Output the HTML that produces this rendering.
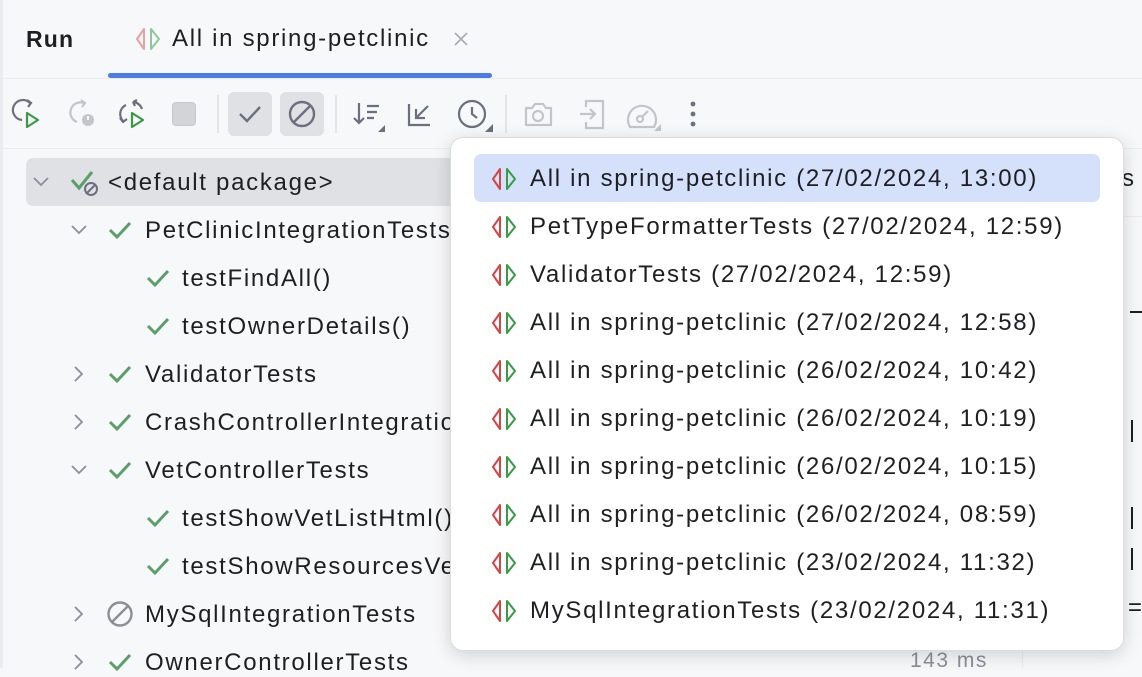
<!DOCTYPE html>
<html><head><meta charset="utf-8"><style>
*{margin:0;padding:0;box-sizing:border-box}
body{width:1142px;height:668px;overflow:hidden;background:#f7f8fa;font-family:"Liberation Sans",sans-serif;color:#1e1f22;position:relative}
.abs{position:absolute}
.t{position:absolute;font-size:24px;letter-spacing:1.7px;white-space:nowrap;line-height:28px}
svg{position:absolute;overflow:visible}
</style></head><body>
<div class="abs" style="left:0;top:0;width:3px;height:668px;background:#ebecf0"></div>
<!-- header -->
<div class="t" style="left:26px;top:25px;font-weight:bold;font-size:23px;letter-spacing:1.2px">Run</div>
<svg style="left:134px;top:27px" width="30" height="24"><path d="M10 2 L3 12 L10 22 Z" fill="none" stroke="#e8a0a0" stroke-width="2" stroke-linejoin="round"/><path d="M17 2 L25 12 L17 22 Z" fill="none" stroke="#8fc79a" stroke-width="2" stroke-linejoin="round"/></svg>
<div class="t" style="left:172px;top:25px">All in spring-petclinic</div>
<svg style="left:454px;top:32px" width="14" height="14"><path d="M1 1L13 13M13 1L1 13" stroke="#a8adb5" stroke-width="1.6"/></svg>
<div class="abs" style="left:108px;top:73px;width:384px;height:5px;border-radius:3px;background:#4a7de8"></div>
<div class="abs" style="left:3px;top:78px;width:1139px;height:1px;background:#ebecf0"></div>
<!-- toolbar -->
<svg style="left:14px;top:99px" width="32" height="32" fill="none" stroke-width="2.2"><path d="M16 4 A10 10 0 1 0 8 21" stroke="#6c707e"/><path d="M13 1 L17 4 L14 8" stroke="#6c707e"/><path d="M13 14 L24 21 L13 28 Z" stroke="#3a9a47" stroke-linejoin="round"/></svg>
<svg style="left:67px;top:99px" width="32" height="32" fill="none" stroke-width="2.2"><path d="M17 4 A10 10 0 1 0 10 23" stroke="#c3c5cb"/><path d="M14 1 L18 4 L15 8" stroke="#c3c5cb"/><circle cx="21" cy="21" r="6" fill="#c3c5cb" stroke="none"/><path d="M21 17v4" stroke="#fff" stroke-width="1.8"/></svg>
<svg style="left:117px;top:99px" width="34" height="34" fill="none" stroke-width="2.2" stroke-linejoin="round"><path d="M9 6 A10 10 0 0 0 6 22" stroke="#6c707e"/><path d="M3 19 L6 23 L10 20" stroke="#6c707e"/><path d="M16 3 L20 1 M16 3 L18 7 M16 3 A10 10 0 0 1 25 10" stroke="#6c707e"/><path d="M15 14 L26 21 L15 28 Z" stroke="#3a9a47"/></svg>
<div class="abs" style="left:172px;top:102px;width:24px;height:24px;border-radius:4px;background:#d3d4d8;border:1.5px solid #c6c8cd"></div>
<div class="abs" style="left:217px;top:95px;width:2px;height:38px;background:#e4e5e8"></div>
<div class="abs" style="left:228px;top:92px;width:44px;height:44px;border-radius:6px;background:#dfe1e5"></div>
<svg style="left:238px;top:104px" width="24" height="20" fill="none"><path d="M2 10 L9 17 L22 3" stroke="#6c707e" stroke-width="2.4"/></svg>
<div class="abs" style="left:280px;top:92px;width:44px;height:44px;border-radius:6px;background:#dfe1e5"></div>
<svg style="left:288px;top:100px" width="28" height="28" fill="none" stroke="#6c707e" stroke-width="2.4"><circle cx="14" cy="14" r="12"/><path d="M6 22 L22 6"/></svg>
<div class="abs" style="left:335px;top:95px;width:2px;height:38px;background:#e4e5e8"></div>
<svg style="left:352px;top:101px" width="36" height="32" fill="none" stroke="#6c707e" stroke-width="2.2"><path d="M7 2v20M2 17l5 5 5-5M15 5h12M15 11h10M15 17h7"/><path d="M33 24 L33 31 L26 31 Z" fill="#6c707e" stroke="none"/></svg>
<svg style="left:406px;top:100px" width="28" height="28" fill="none" stroke="#6c707e" stroke-width="2.2"><path d="M3 4 V25 H24 M10 18 L22 6 M10 9 V18 H19"/></svg>
<svg style="left:457px;top:99px" width="36" height="34" fill="none" stroke="#6c707e" stroke-width="2.2"><circle cx="15" cy="15" r="13"/><path d="M15 8 V15 L20 19"/><path d="M36 25 L36 33 L28 33 Z" fill="#6c707e" stroke="none"/></svg>
<div class="abs" style="left:505px;top:95px;width:2px;height:38px;background:#e4e5e8"></div>
<svg style="left:524px;top:101px" width="30" height="26" fill="none" stroke="#c3c5cb" stroke-width="2.2" stroke-linejoin="round"><path d="M2 7 H8 L11 3 H19 L22 7 H27 V24 H2 Z"/><circle cx="14" cy="15" r="5"/></svg>
<svg style="left:578px;top:99px" width="28" height="32" fill="none" stroke="#c3c5cb" stroke-width="2.2"><path d="M8 8 V2 H25 V29 H8 V23 M2 15 H17 M12 10 L17 15 L12 20"/></svg>
<svg style="left:626px;top:100px" width="36" height="32" fill="none" stroke="#c3c5cb" stroke-width="2.2"><path d="M4 27 A14 14 0 1 1 28 27 Z"/><circle cx="14" cy="19" r="3"/><path d="M16 17 L22 11"/><path d="M35 24 L35 31 L28 31 Z" fill="#c3c5cb" stroke="none"/></svg>
<svg style="left:688px;top:101px" width="10" height="28"><circle cx="5" cy="3" r="2.4" fill="#6c707e"/><circle cx="5" cy="13" r="2.4" fill="#6c707e"/><circle cx="5" cy="23" r="2.4" fill="#6c707e"/></svg>
<div class="abs" style="left:3px;top:148px;width:1139px;height:1px;background:#ebecf0"></div>
<!-- right panel -->
<div class="abs" style="left:1022px;top:149px;width:1px;height:519px;background:#ebecf0"></div>
<div class="abs" style="left:1023px;top:216px;width:119px;height:1px;background:#ebecf0"></div>
<div class="t" style="left:1122px;top:165px">s</div>
<div class="abs" style="left:1130px;top:311px;width:12px;height:2px;background:#1e1f22"></div>
<div class="abs" style="left:1131px;top:420px;width:2px;height:22px;background:#1e1f22"></div>
<div class="abs" style="left:1131px;top:507px;width:2px;height:22px;background:#1e1f22"></div>
<div class="abs" style="left:1131px;top:548px;width:2px;height:22px;background:#1e1f22"></div>
<div class="t" style="left:1128px;top:594px">=</div>
<div class="t" style="left:910px;top:647px;color:#8c8f97;font-size:21px;letter-spacing:1.5px">143 ms</div>
<!-- tree -->
<div class="abs" style="left:26px;top:158px;width:440px;height:48px;border-radius:7px;background:#dfe1e5"></div>
<svg style="left:33px;top:177px" width="16" height="10" fill="none" stroke="#8c8f97" stroke-width="1.8"><path d="M1 1 L8 8 L15 1"/></svg>
<svg style="left:70px;top:170px" width="30" height="28" fill="none"><path d="M2 10 L9 18 L22 2" stroke="#5a9e68" stroke-width="3"/><circle cx="21" cy="19" r="6" stroke="#6c707e" stroke-width="2"/><path d="M17 23 L25 15" stroke="#6c707e" stroke-width="2"/></svg>
<div class="t" style="left:108px;top:169px">&lt;default package&gt;</div>

<svg style="left:71px;top:225px" width="16" height="10" fill="none" stroke="#8c8f97" stroke-width="1.8"><path d="M1 1 L8 8 L15 1"/></svg>
<svg style="left:108px;top:220px" width="26" height="20" fill="none"><path d="M2 10 L9 17 L22 3" stroke="#5a9e68" stroke-width="3"/></svg>
<div class="t" style="left:145px;top:217px">PetClinicIntegrationTests</div>
<svg style="left:146px;top:268px" width="26" height="20" fill="none"><path d="M2 10 L9 17 L22 3" stroke="#5a9e68" stroke-width="3"/></svg>
<div class="t" style="left:182px;top:265px">testFindAll()</div>
<svg style="left:146px;top:316px" width="26" height="20" fill="none"><path d="M2 10 L9 17 L22 3" stroke="#5a9e68" stroke-width="3"/></svg>
<div class="t" style="left:182px;top:313px">testOwnerDetails()</div>
<svg style="left:74px;top:366px" width="10" height="16" fill="none" stroke="#8c8f97" stroke-width="1.8"><path d="M1 1 L8 8 L1 15"/></svg>
<svg style="left:108px;top:364px" width="26" height="20" fill="none"><path d="M2 10 L9 17 L22 3" stroke="#5a9e68" stroke-width="3"/></svg>
<div class="t" style="left:145px;top:361px">ValidatorTests</div>
<svg style="left:74px;top:414px" width="10" height="16" fill="none" stroke="#8c8f97" stroke-width="1.8"><path d="M1 1 L8 8 L1 15"/></svg>
<svg style="left:108px;top:412px" width="26" height="20" fill="none"><path d="M2 10 L9 17 L22 3" stroke="#5a9e68" stroke-width="3"/></svg>
<div class="t" style="left:145px;top:409px">CrashControllerIntegrationTests</div>
<svg style="left:71px;top:465px" width="16" height="10" fill="none" stroke="#8c8f97" stroke-width="1.8"><path d="M1 1 L8 8 L15 1"/></svg>
<svg style="left:108px;top:460px" width="26" height="20" fill="none"><path d="M2 10 L9 17 L22 3" stroke="#5a9e68" stroke-width="3"/></svg>
<div class="t" style="left:145px;top:457px">VetControllerTests</div>
<svg style="left:146px;top:508px" width="26" height="20" fill="none"><path d="M2 10 L9 17 L22 3" stroke="#5a9e68" stroke-width="3"/></svg>
<div class="t" style="left:182px;top:505px">testShowVetListHtml()</div>
<svg style="left:146px;top:556px" width="26" height="20" fill="none"><path d="M2 10 L9 17 L22 3" stroke="#5a9e68" stroke-width="3"/></svg>
<div class="t" style="left:182px;top:553px">testShowResourcesVetList()</div>
<svg style="left:74px;top:606px" width="10" height="16" fill="none" stroke="#8c8f97" stroke-width="1.8"><path d="M1 1 L8 8 L1 15"/></svg>
<svg style="left:107px;top:601px" width="28" height="28" fill="none" stroke="#8c8f97" stroke-width="2.4"><circle cx="13" cy="13" r="11.5"/><path d="M5 21 L21 5"/></svg>
<div class="t" style="left:145px;top:601px">MySqlIntegrationTests</div>
<svg style="left:74px;top:654px" width="10" height="16" fill="none" stroke="#8c8f97" stroke-width="1.8"><path d="M1 1 L8 8 L1 15"/></svg>
<svg style="left:108px;top:652px" width="26" height="20" fill="none"><path d="M2 10 L9 17 L22 3" stroke="#5a9e68" stroke-width="3"/></svg>
<div class="t" style="left:145px;top:649px">OwnerControllerTests</div>

<!-- popup -->
<div class="abs" style="left:450px;top:137px;width:674px;height:514px;background:#fff;border-radius:13px;border:1px solid #dcdde1;box-shadow:0 4px 18px rgba(0,0,0,0.16)"></div>
<div class="abs" style="left:474px;top:154px;width:626px;height:48px;border-radius:7px;background:#d5e0fb"></div>
<svg width="0" height="0"><defs><g id="ic"><path d="M10 2 L3 12 L10 22 Z" fill="none" stroke="#d64545" stroke-width="2" stroke-linejoin="round"/><path d="M17 2 L25 12 L17 22 Z" fill="none" stroke="#3a9a47" stroke-width="2" stroke-linejoin="round"/></g></defs></svg>
<svg style="left:490px;top:167px" width="30" height="24"><use href="#ic"/></svg>
<svg style="left:490px;top:215px" width="30" height="24"><use href="#ic"/></svg>
<svg style="left:490px;top:263px" width="30" height="24"><use href="#ic"/></svg>
<svg style="left:490px;top:311px" width="30" height="24"><use href="#ic"/></svg>
<svg style="left:490px;top:359px" width="30" height="24"><use href="#ic"/></svg>
<svg style="left:490px;top:407px" width="30" height="24"><use href="#ic"/></svg>
<svg style="left:490px;top:455px" width="30" height="24"><use href="#ic"/></svg>
<svg style="left:490px;top:503px" width="30" height="24"><use href="#ic"/></svg>
<svg style="left:490px;top:551px" width="30" height="24"><use href="#ic"/></svg>
<svg style="left:490px;top:599px" width="30" height="24"><use href="#ic"/></svg>
<div class="t" style="left:530px;top:165px">All in spring-petclinic (27/02/2024, 13:00)</div>
<div class="t" style="left:530px;top:213px">PetTypeFormatterTests (27/02/2024, 12:59)</div>
<div class="t" style="left:530px;top:261px">ValidatorTests (27/02/2024, 12:59)</div>
<div class="t" style="left:530px;top:309px">All in spring-petclinic (27/02/2024, 12:58)</div>
<div class="t" style="left:530px;top:357px">All in spring-petclinic (26/02/2024, 10:42)</div>
<div class="t" style="left:530px;top:405px">All in spring-petclinic (26/02/2024, 10:19)</div>
<div class="t" style="left:530px;top:453px">All in spring-petclinic (26/02/2024, 10:15)</div>
<div class="t" style="left:530px;top:501px">All in spring-petclinic (26/02/2024, 08:59)</div>
<div class="t" style="left:530px;top:549px">All in spring-petclinic (23/02/2024, 11:32)</div>
<div class="t" style="left:530px;top:597px">MySqlIntegrationTests (23/02/2024, 11:31)</div>
</body></html>
